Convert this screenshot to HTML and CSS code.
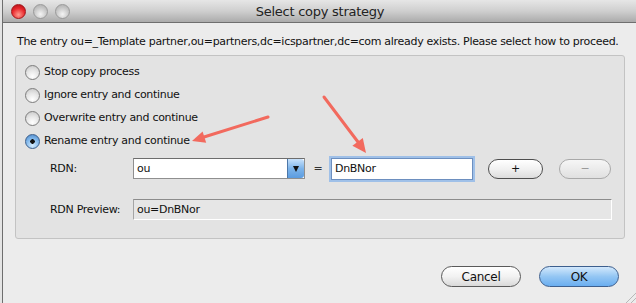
FILE: index.html
```html
<html>
<head>
    <meta charset="UTF-8"/>
    <meta name="viewport" content="width=device-width, initial-scale=1.0" />
    <title>Select copy strategy</title>
    <link rel="stylesheet" href="styles.css">
</head>
<body>
<div class="window">
    <div class="titlebar">
        <div class="lights">
            <span class="light close"></span>
            <span class="light"></span>
            <span class="light"></span>
        </div>
        <div class="title">Select copy strategy</div>
    </div>

    <div class="content">
        <p class="message">The entry ou=_Template partner,ou=partners,dc=icspartner,dc=com already exists. Please select how to proceed.</p>

        <div class="group">
            <div class="radio"><span class="radio_btn"></span>Stop copy process</div>
            <div class="radio"><span class="radio_btn"></span>Ignore entry and continue</div>
            <div class="radio"><span class="radio_btn"></span>Overwrite entry and continue</div>
            <div class="radio"><span class="radio_btn checked"></span>Rename entry and continue</div>

            <div class="form_row rdn_row">
                <span class="form_label">RDN:</span>
                <div class="combo">
                    <span class="combo_text">ou</span>
                    <span class="combo_btn"><span class="tri"></span></span>
                </div>
                <span class="equals">=</span>
                <div class="field focused">DnBNor</div>
                <button class="pill">+</button>
                <button class="pill disabled">&minus;</button>
            </div>

            <div class="form_row preview_row">
                <span class="form_label">RDN Preview:</span>
                <div class="preview">ou=DnBNor</div>
            </div>
        </div>

        <div class="buttons">
            <button class="push">Cancel</button>
            <button class="push default">OK</button>
        </div>
    </div>

    <svg class="grip" width="14" height="11" viewBox="0 0 14 11">
        <line x1="3" y1="11" x2="14" y2="0" stroke="#b8b8b8" stroke-width="1"/>
        <line x1="8" y1="11" x2="14" y2="5" stroke="#b8b8b8" stroke-width="1"/>
    </svg>
</div>

<svg class="arrows" width="636" height="303" viewBox="0 0 636 303">
    <line x1="268" y1="117" x2="204" y2="137" stroke="#f26a5e" stroke-width="3" stroke-linecap="round"/>
    <polygon points="192,141 206.2,142.8 202.6,131.4" fill="#f26a5e"/>
    <line x1="324" y1="97" x2="358" y2="142" stroke="#f26a5e" stroke-width="3" stroke-linecap="round"/>
    <polygon points="366,153 362.8,137.9 352.4,145.7" fill="#f26a5e"/>
</svg>
</body>
</html>
```

FILE: styles.css
```css
body {
    margin: 0;
    background: #e4e4e4;
    font-family: "DejaVu Sans", sans-serif;
    font-size: 11px;
    letter-spacing: -0.3px;
    color: #111;
    overflow: hidden;
}

.window {
    position: relative;
    width: 634px;
    height: 303px;
    margin-left: 2px;
    border-left: 1px solid #6e6e6e;
    border-right: 1px solid #6e6e6e;
    background: #ececec;
    overflow: hidden;
}

.titlebar {
    position: relative;
    height: 22px;
    border-bottom: 1px solid #6f6f6f;
    background: linear-gradient(#e6e6e6, #cfcfcf 50%, #ababab);
    display: flex;
    align-items: center;
}

.lights {
    display: flex;
    gap: 7px;
    padding-left: 8px;
}

.light {
    width: 15px;
    height: 15px;
    border-radius: 50%;
    box-sizing: border-box;
    border: 1px solid #9a9a9a;
    background: radial-gradient(circle at 50% 70%, #f4f4f4, #c4c4c4 60%, #a9a9a9);
}

.light.close {
    border-color: #a3151a;
    background: radial-gradient(circle at 50% 75%, #ff9b8f, #e8272c 55%, #a80d12);
}

.title {
    position: absolute;
    left: 0;
    right: 0;
    text-align: center;
    font-size: 13px;
    letter-spacing: -0.25px;
    color: #222;
}

.content {
    padding: 11px 12px 0 12px;
}

.message {
    margin: 0 0 5px 2px;
    line-height: 16px;
    white-space: nowrap;
}

.group {
    border: 1px solid #c3c3c3;
    border-radius: 3px;
    background: #e3e3e3;
    padding: 9px 9px 18px 9px;
}

.radio {
    display: flex;
    align-items: center;
    gap: 4px;
    height: 14px;
    line-height: 14px;
    margin-bottom: 9px;
}

.radio_btn {
    width: 15px;
    height: 15px;
    box-sizing: border-box;
    border-radius: 50%;
    border: 1px solid #7d7d7d;
    background: radial-gradient(circle at 50% 80%, #ffffff, #e6e6e6 50%, #c4c4c4);
}

.radio_btn.checked {
    border-color: #3b5f8c;
    background: radial-gradient(circle, #111 0, #111 2px, transparent 2.5px),
                radial-gradient(circle at 50% 80%, #d4ecff, #7fb6ea 55%, #4a86c8);
}

.form_row {
    display: flex;
    align-items: center;
    padding-left: 25px;
}

.rdn_row {
    height: 23px;
    margin-top: 4px;
}

.preview_row {
    margin-top: 19px;
}

.form_label {
    width: 83px;
}

.combo {
    display: flex;
    width: 172px;
    height: 21px;
    box-sizing: border-box;
    border: 1px solid #8f8f8f;
    border-top-color: #6d6d6d;
    background: #fff;
}

.combo_text {
    flex: 1;
    padding-left: 3px;
    line-height: 19px;
}

.combo_btn {
    width: 16px;
    display: flex;
    align-items: center;
    justify-content: center;
    border-left: 1px solid #4d77a8;
    border-radius: 0 3px 3px 0;
    background: linear-gradient(#c9e2fb, #7db4ea 50%, #5b9ce0);
}

.tri {
    width: 0;
    height: 0;
    border-left: 3.5px solid transparent;
    border-right: 3.5px solid transparent;
    border-top: 6px solid #111;
}

.equals {
    width: 26px;
    text-align: center;
    color: #333;
}

.field {
    width: 142px;
    height: 22px;
    box-sizing: border-box;
    border: 1px solid #6d8fbf;
    background: #fff;
    padding-left: 3px;
    line-height: 20px;
}

.field.focused {
    box-shadow: 0 0 0 2px #9fc0e8;
}

.pill {
    height: 20px;
    width: 55px;
    margin-left: 15px;
    border-radius: 10px;
    border: 1px solid #4e4e4e;
    background: linear-gradient(#ffffff, #f1f1f1 50%, #dcdcdc);
    font-family: "DejaVu Sans", sans-serif;
    font-size: 11px;
    color: #111;
    padding: 0;
}

.pill.disabled {
    width: 52px;
    margin-left: 16px;
    border-color: #a9a9a9;
    color: #9a9a9a;
    background: linear-gradient(#f6f6f6, #ebebeb 50%, #e0e0e0);
}

.preview {
    width: 479px;
    height: 21px;
    box-sizing: border-box;
    border: 1px solid #fff;
    border-top-color: #8c8c8c;
    border-left-color: #a5a5a5;
    background: #e6e6e6;
    padding-left: 3px;
    line-height: 19px;
}

.buttons {
    display: flex;
    justify-content: flex-end;
    gap: 18px;
    margin-top: 27px;
    padding-right: 6px;
}

.push {
    width: 80px;
    height: 21px;
    border-radius: 11px;
    border: 1px solid #5a5a5a;
    background: linear-gradient(#ffffff, #f2f2f2 50%, #d9d9d9);
    font-family: "DejaVu Sans", sans-serif;
    font-size: 12px;
    letter-spacing: -0.3px;
    color: #111;
    padding: 0;
}

.push.default {
    border-color: #3d5f8e;
    background: linear-gradient(#d2e8fc, #94c6f3 50%, #6aaef0);
}

.grip {
    position: absolute;
    left: 620px;
    top: 292px;
}

.arrows {
    position: absolute;
    left: 0;
    top: 0;
    pointer-events: none;
}
```
